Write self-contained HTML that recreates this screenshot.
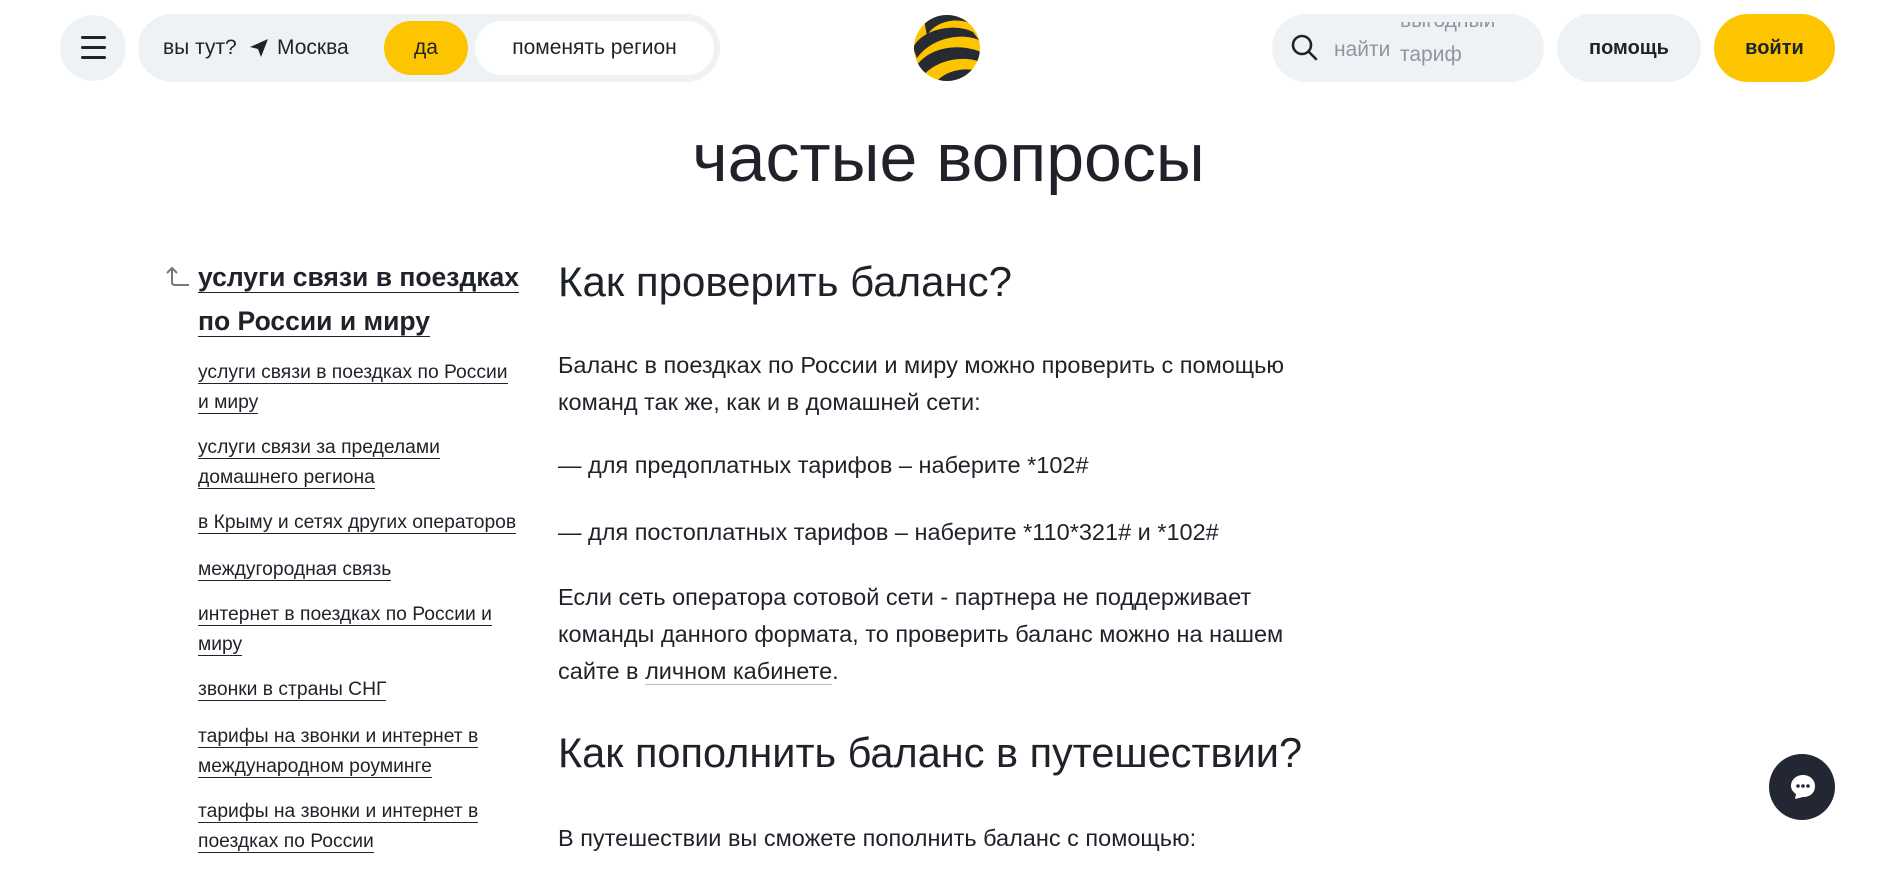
<!DOCTYPE html>
<html><head><meta charset="utf-8"><style>
*{margin:0;padding:0;box-sizing:border-box}
body{width:1887px;height:876px;overflow:hidden;background:#fff;font-family:"Liberation Sans","Noto Sans CJK SC",sans-serif;color:#1f2229;position:relative}
.a{position:absolute;white-space:nowrap}
.pill{position:absolute;border-radius:40px;background:#eff2f5}
.nav a{color:#1f2229;text-decoration:none;border-bottom:1.5px solid #1f2229}
.nav{position:absolute;left:198px;font-size:19.3px;line-height:30px}
.p{position:absolute;left:558px;font-size:23.5px;color:#1f2229;white-space:nowrap}
</style></head><body>
<div class="pill" style="left:60px;top:15px;width:66px;height:66px;border-radius:50%"></div>
<div class="a" style="left:81px;top:36px;width:25px;height:3px;background:#1f2229;border-radius:2px"></div>
<div class="a" style="left:81px;top:46px;width:25px;height:3px;background:#1f2229;border-radius:2px"></div>
<div class="a" style="left:81px;top:56px;width:25px;height:3px;background:#1f2229;border-radius:2px"></div>

<div class="pill" style="left:138px;top:14px;width:582px;height:68px"></div>
<div class="a" style="left:163px;top:36px;font-size:21px">вы тут?</div>
<svg class="a" style="left:248px;top:37px" width="22" height="22" viewBox="0 0 22 22"><path d="M2 10 L20 2 L13 20 L10 12 Z" fill="#1f2229"/></svg>
<div class="a" style="left:277px;top:36px;font-size:21px">Москва</div>
<div class="a" style="left:384px;top:21px;width:84px;height:54px;border-radius:27px;background:#fdc500;font-size:21px;text-align:center;line-height:54px">да</div>
<div class="a" style="left:475px;top:21px;width:239px;height:54px;border-radius:27px;background:#fff;font-size:21px;text-align:center;line-height:54px">поменять регион</div>

<svg class="a" style="left:913px;top:14px" width="68" height="68" viewBox="0 0 68 68">
<defs><clipPath id="c"><circle cx="34" cy="34" r="33"/></clipPath></defs>
<circle cx="34" cy="34" r="33" fill="#fdc500"/>
<g clip-path="url(#c)" fill="#252a33">
<path d="M14 22 C22 6 48 2 62 12 L66 0 L10 0 Z"/>
<path d="M0 34 C8 16 40 8 60 18 L66 26 C48 18 18 24 4 44 Z"/>
<path d="M2 54 C14 34 44 28 68 38 L68 48 C46 40 20 48 8 64 Z"/>
<path d="M20 72 C30 56 52 52 70 58 L70 72 Z"/>
</g></svg>

<div class="pill" style="left:1272px;top:14px;width:272px;height:68px"></div>
<svg class="a" style="left:1290px;top:33px" width="30" height="30" viewBox="0 0 30 30"><circle cx="12" cy="12" r="9" stroke="#1f2229" stroke-width="2.6" fill="none"/><path d="M19 19 L26 26" stroke="#1f2229" stroke-width="2.6" stroke-linecap="round"/></svg>
<div class="a" style="left:1334px;top:38px;font-size:21px;color:#8f96a3">найти</div>
<div class="a" style="left:1400px;top:22px;height:48px;overflow:hidden;font-size:21px;color:#8f96a3;line-height:34px"><div style="margin-top:-18px">выгодный</div><div>тариф</div></div>

<div class="pill" style="left:1557px;top:14px;width:144px;height:68px;text-align:center;line-height:68px;font-size:20px;font-weight:bold">помощь</div>
<div class="pill" style="left:1714px;top:14px;width:121px;height:68px;background:#fdc500;text-align:center;line-height:68px;font-size:20px;font-weight:bold">войти</div>

<div class="a" style="left:0;width:1887px;text-align:center;top:118px;font-size:68px;line-height:80px;color:#1f2229;padding-left:10px">частые вопросы</div>

<svg class="a" style="left:163px;top:265px" width="30" height="22" viewBox="0 0 30 22"><path d="M9 3 L9 17 Q9 20 12 20 L26 20 M4 8 L9 3 L14 8" stroke="#777" stroke-width="2" fill="none"/></svg>
<div class="nav" style="top:255px;font-size:26.5px;font-weight:bold;line-height:44px"><a>услуги связи в поездках</a><br><a>по России и миру</a></div>
<div class="nav" style="top:358px"><a>услуги связи в поездках по России</a><br><a>и миру</a></div>
<div class="nav" style="top:433px"><a>услуги связи за пределами</a><br><a>домашнего региона</a></div>
<div class="nav" style="top:508px"><a>в Крыму и сетях других операторов</a></div>
<div class="nav" style="top:555px"><a>междугородная связь</a></div>
<div class="nav" style="top:600px"><a>интернет в поездках по России и</a><br><a>миру</a></div>
<div class="nav" style="top:675px"><a>звонки в страны СНГ</a></div>
<div class="nav" style="top:722px"><a>тарифы на звонки и интернет в</a><br><a>международном роуминге</a></div>
<div class="nav" style="top:797px"><a>тарифы на звонки и интернет в</a><br><a>поездках по России</a></div>

<div class="p" style="top:256px;font-size:42px;line-height:52px">Как проверить баланс?</div>
<div class="p" style="top:347px;line-height:37px">Баланс в поездках по России и миру можно проверить с помощью<br>команд так же, как и в домашней сети:</div>
<div class="p" style="top:447px;line-height:37px">— для предоплатных тарифов – наберите *102#</div>
<div class="p" style="top:514px;line-height:37px">— для постоплатных тарифов – наберите *110*321# и *102#</div>
<div class="p" style="top:579px;line-height:37px">Если сеть оператора сотовой сети - партнера не поддерживает<br>команды данного формата, то проверить баланс можно на нашем<br>сайте в <span style="border-bottom:1.5px solid #bbb">личном кабинете</span>.</div>
<div class="p" style="top:727px;font-size:41.5px;line-height:52px">Как пополнить баланс в путешествии?</div>
<div class="p" style="top:820px;line-height:37px">В путешествии вы сможете пополнить баланс с помощью:</div>

<div class="a" style="left:1769px;top:754px;width:66px;height:66px;border-radius:50%;background:#222733"></div>
<svg class="a" style="left:1786px;top:770px" width="34" height="34" viewBox="0 0 34 34"><path d="M17 5 C24 5 29 10 29 16 C29 23 24 27 17 27 L9 29 L10 24 C7 22 5 19 5 16 C5 10 10 5 17 5 Z" fill="#fff"/><circle cx="12" cy="16" r="1.8" fill="#222733"/><circle cx="17" cy="16" r="1.8" fill="#222733"/><circle cx="22" cy="16" r="1.8" fill="#222733"/></svg>
</body></html>
